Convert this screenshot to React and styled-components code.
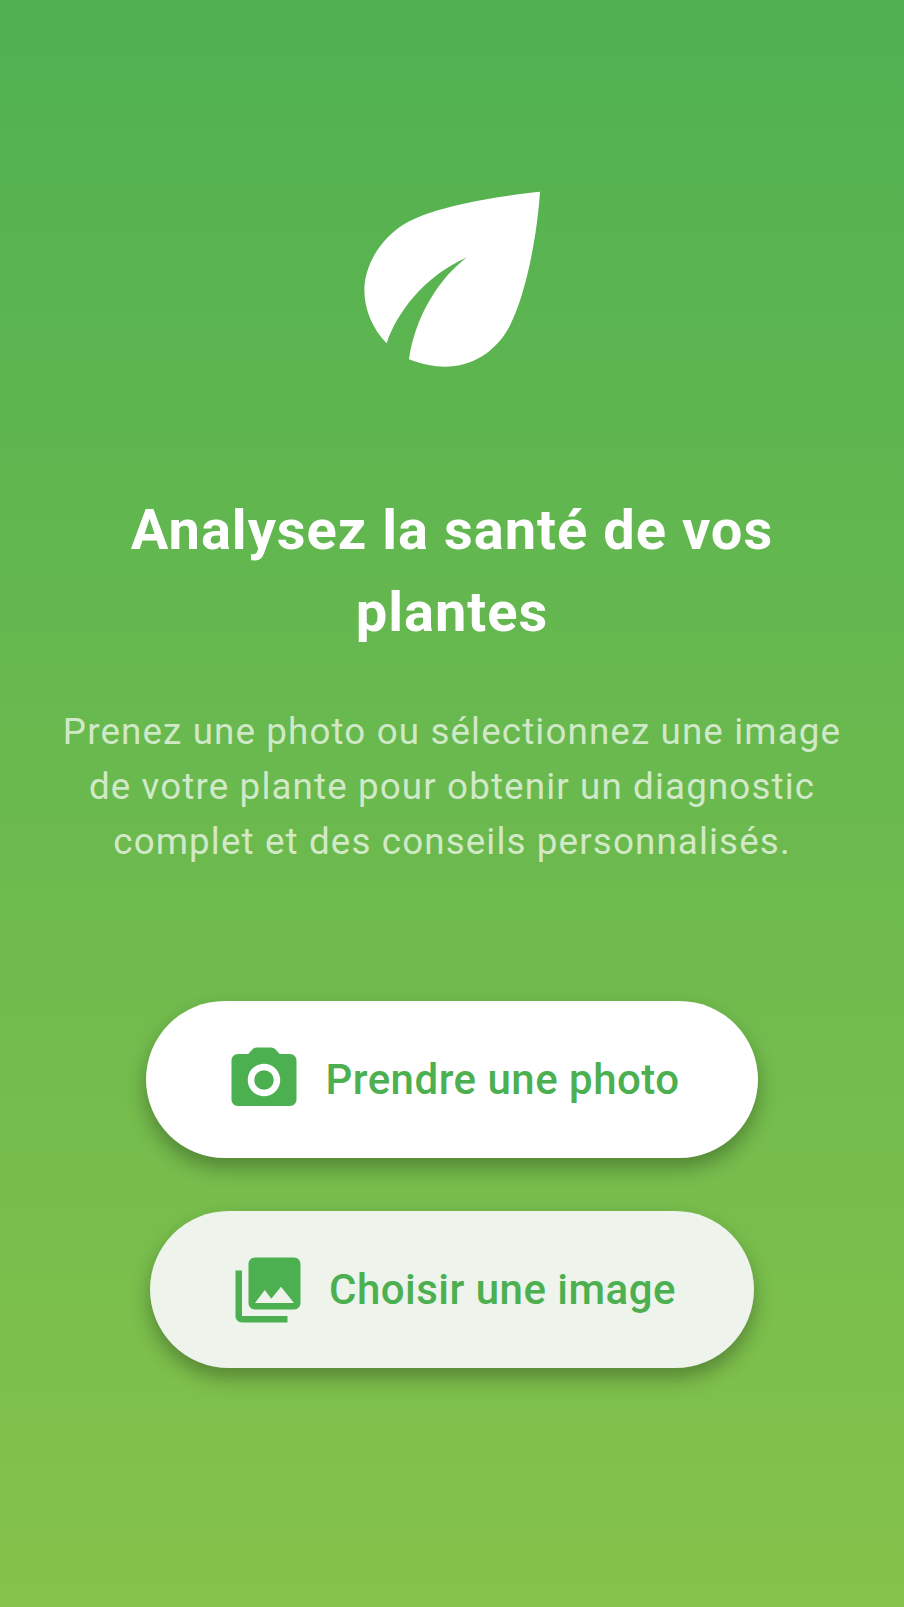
import React from 'react';
import styled, { createGlobalStyle } from 'styled-components';

const GlobalStyle = createGlobalStyle`
  html, body {
    margin: 0;
    padding: 0;
  }
  body {
    font-family: Roboto, "Liberation Sans", sans-serif;
  }
`;

const Screen = styled.main`
  box-sizing: border-box;
  width: 904px;
  height: 1607px;
  padding-top: 170px;
  display: flex;
  flex-direction: column;
  align-items: center;
  background: linear-gradient(180deg, #50b151 0%, #85c24b 100%);
  overflow: hidden;
`;

const Leaf = styled.svg`
  display: block;
  width: 224px;
  height: 210px;
  fill: #fff;
`;

const Title = styled.h1`
  margin: 109px 0 0;
  width: 780px;
  font-size: 56px;
  line-height: 82px;
  font-weight: 700;
  letter-spacing: 1px;
  color: #fff;
  text-align: center;
`;

const Description = styled.p`
  margin: 51px 0 0;
  width: 800px;
  font-size: 36.75px;
  line-height: 55px;
  font-weight: 400;
  letter-spacing: 1.13px;
  color: rgba(255, 255, 255, 0.7);
  text-align: center;
`;

const Actions = styled.div`
  margin-top: 132px;
  display: flex;
  flex-direction: column;
  align-items: center;
  gap: 53px;
`;

const ActionButton = styled.button`
  box-sizing: border-box;
  height: 157px;
  padding: 0 78px 0 79px;
  display: flex;
  align-items: center;
  gap: 22px;
  border: none;
  border-radius: 79px;
  background: ${(props) => (props.$muted ? '#eef3ec' : '#fff')};
  box-shadow: 0 10px 20px rgba(0, 0, 0, 0.3);
  color: #4caf50;
  font-family: inherit;
  font-size: 42px;
  font-weight: 500;
  letter-spacing: 0.48px;
  cursor: pointer;
`;

const ButtonIcon = styled.svg`
  display: block;
  flex: none;
  width: 78px;
  height: 78px;
  fill: #4caf50;
`;

const App = () => {
  return (
    <Screen>
      <GlobalStyle />
      <Leaf viewBox="0 0 672 630" aria-hidden="true">
        <path d="M600 65C480 78 300 105 205 155C120 200 73 290 73 360C73 420 100 480 140 520C170 430 250 320 382 262C300 320 225 440 207 568C245 583 280 590 315 590C395 590 468 545 508 470C560 370 592 190 600 65Z" />
      </Leaf>
      <Title>Analysez la santé de vos plantes</Title>
      <Description>
        Prenez une photo ou sélectionnez une image de votre plante pour obtenir un diagnostic complet et des conseils personnalisés.
      </Description>
      <Actions>
        <ActionButton>
          <ButtonIcon viewBox="0 0 24 24" aria-hidden="true">
            <circle cx="12" cy="12" r="3" />
            <path d="M20 4h-3.17l-1.24-1.35c-.37-.41-.91-.65-1.47-.65H9.88c-.56 0-1.1.24-1.48.65L7.17 4H4c-1.1 0-2 .9-2 2v12c0 1.1.9 2 2 2h16c1.1 0 2-.9 2-2V6c0-1.1-.9-2-2-2zm-8 13c-2.76 0-5-2.24-5-5s2.24-5 5-5 5 2.24 5 5-2.24 5-5 5z" />
          </ButtonIcon>
          Prendre une photo
        </ActionButton>
        <ActionButton $muted>
          <ButtonIcon viewBox="0 0 24 24" aria-hidden="true">
            <path d="M22 16V4c0-1.1-.9-2-2-2H8c-1.1 0-2 .9-2 2v12c0 1.1.9 2 2 2h12c1.1 0 2-.9 2-2zm-11-4l2.03 2.71L16 11l4 5H8l3-4zM2 6v14c0 1.1.9 2 2 2h14v-2H4V6H2z" />
          </ButtonIcon>
          Choisir une image
        </ActionButton>
      </Actions>
    </Screen>
  );
};

export default App;
